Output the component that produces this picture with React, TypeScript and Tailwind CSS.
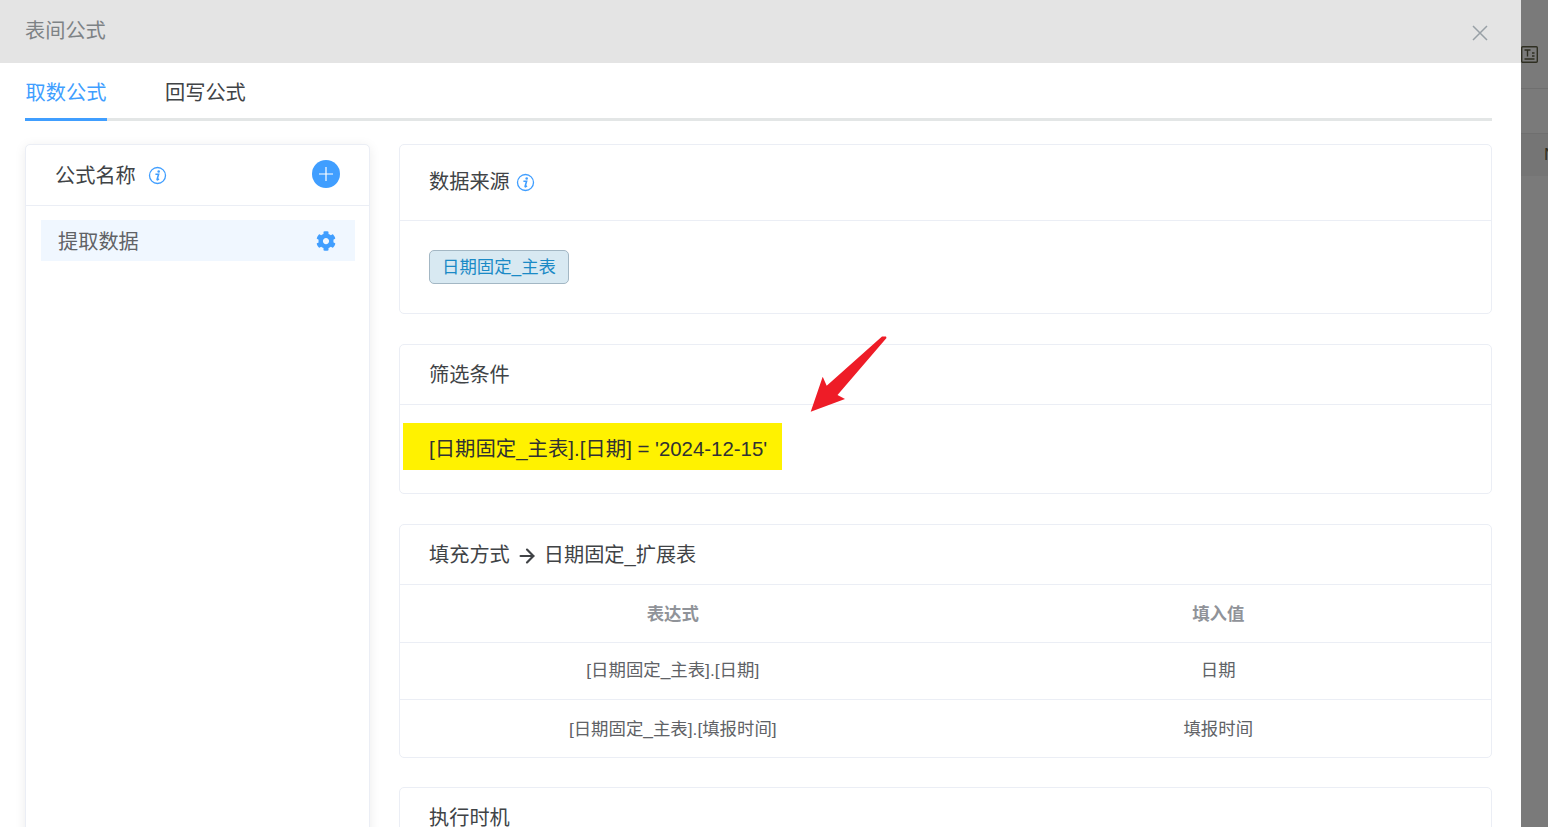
import { FaCog } from "react-icons/fa";
import { LuArrowRight } from "react-icons/lu";

const FONT = "font-['Liberation_Sans','Noto_Sans_CJK_SC',sans-serif]";

function InfoIcon() {
  return (
    <svg width="19" height="19" viewBox="0 0 19 19" fill="none" className="shrink-0">
      <circle cx="9.5" cy="9.5" r="8" stroke="#409eff" strokeWidth="1.3" />
      <circle cx="10.7" cy="5.5" r="1.3" fill="#409eff" />
      <path d="M7.4 8.2h3.2l-1.5 5.2c-.1.5.3.6.7.3l1.2-.8" stroke="#409eff" strokeWidth="1.6" fill="none" />
    </svg>
  );
}

function Card({ children, className }: { children: React.ReactNode; className: string }) {
  return <section className={`bg-white border border-[#ebeef5] rounded-[5px] ${className}`}>{children}</section>;
}

const rows = [
  ["[日期固定_主表].[日期]", "日期"],
  ["[日期固定_主表].[填报时间]", "填报时间"],
];

export default function App() {
  return (
    <div className={`relative flex h-[827px] w-[1548px] overflow-hidden bg-white ${FONT}`}>
      <div className="flex h-full w-[1521px] shrink-0 flex-col overflow-hidden bg-white">
        <header className="flex h-[63px] shrink-0 items-center justify-between bg-[#e4e4e4] pl-[25px] pr-[32px]">
          <h1 className="text-[20.2px] leading-[28px] text-[#7d8285] font-normal -mt-[2px]">表间公式</h1>
          <svg width="18" height="18" viewBox="0 0 18 18" className="mt-[3px]" stroke="#98a0a6" strokeWidth="1.5">
            <path d="M2 2l14 14M16 2L2 16" />
          </svg>
        </header>

        <div className="flex min-h-0 flex-1 flex-col pl-[25px] pr-[29px]">
          <nav className="flex h-[58px] shrink-0 border-b-[3px] border-[#e3e6e6] text-[20.2px]">
            <div className="-mb-[3px] flex h-[58px] w-[82px] items-center justify-center border-b-[3px] border-[#409eff] pt-[5px] text-[#409eff]">取数公式</div>
            <div className="ml-[58px] flex h-[55px] items-center pt-[5px] text-[#404346]">回写公式</div>
          </nav>

          <div className="mt-[23px] flex min-h-0 flex-1 gap-[29px]">
            <aside className="h-[740px] w-[345px] shrink-0 rounded-[5px] border border-[#ebeef5] bg-white shadow-[0_2px_12px_rgba(0,0,0,0.08)]">
              <div className="flex h-[61px] items-center justify-between border-b border-[#ebeef5] pl-[29px] pr-[29px]">
                <div className="mt-[2px] flex items-center gap-[12px] text-[20.2px] text-[#404346]">
                  <span>公式名称</span>
                  <InfoIcon />
                </div>
                <div className="flex h-[28px] w-[28px] items-center justify-center rounded-full bg-[#409eff] -mt-[2px]">
                  <svg width="14" height="14" viewBox="0 0 14 14" stroke="white" strokeWidth="1.2">
                    <path d="M7 0v14M0 7h14" />
                  </svg>
                </div>
              </div>
              <div className="pl-[15px] pr-[14px] pt-[14px]">
                <div className="flex h-[41px] items-center justify-between bg-[#f0f7ff] pl-[17px] pr-[19px]">
                  <span className="mt-[4px] text-[20.2px] text-[#606266]">提取数据</span>
                  <FaCog className="text-[20px] text-[#409eff]" />
                </div>
              </div>
            </aside>

            <main className="flex min-w-0 flex-1 flex-col gap-[30px]">
              <Card className="h-[170px] shrink-0">
                <div className="flex h-[76px] items-center gap-[6px] border-b border-[#ebeef5] pl-[29px] text-[20.2px] text-[#404346]">
                  <span>数据来源</span>
                  <InfoIcon />
                </div>
                <div className="pl-[29px] pt-[29px]">
                  <span className="inline-flex h-[34px] w-[140px] items-center justify-center rounded-[5px] border border-[#a3b7c4] bg-[#d8e9f2] text-[17.4px] text-[#1b8ac6]">日期固定_主表</span>
                </div>
              </Card>

              <Card className="h-[150px] shrink-0">
                <div className="flex h-[60px] items-center border-b border-[#ebeef5] pl-[29px] pt-[2px] text-[20.2px] text-[#404346]">筛选条件</div>
                <div className="pl-[3px] pt-[18px]">
                  <span className="inline-flex h-[47px] w-[379px] items-center bg-[#fff200] pl-[26px] pt-[6px] text-[20.4px] text-[#303133]">[日期固定_主表].[日期] = '2024-12-15'</span>
                </div>
              </Card>

              <Card className="h-[234px] shrink-0">
                <div className="flex h-[60px] items-center gap-[6px] border-b border-[#ebeef5] pl-[29px] pt-[2px] text-[20.2px] text-[#404346]">
                  <span>填充方式</span>
                  <LuArrowRight className="text-[22px]" strokeWidth={2.4} />
                  <span>日期固定_扩展表</span>
                </div>
                <div className="grid h-[58px] grid-cols-2 items-center border-b border-[#ebeef5] pt-[2px] text-center text-[17.4px] font-bold text-[#909399]">
                  <div>表达式</div>
                  <div>填入值</div>
                </div>
                {rows.map(([a, b], i) => (
                  <div key={a} className={`grid grid-cols-2 items-center text-center text-[17.4px] text-[#606266] ${i === 0 ? "h-[57px] border-b border-[#ebeef5] pb-[2px]" : "h-[58px]"}`}>
                    <div>{a}</div>
                    <div>{b}</div>
                  </div>
                ))}
              </Card>

              <Card className="-mt-[1px] h-[120px] shrink-0">
                <div className="flex h-[60px] items-center pl-[29px] text-[20.2px] text-[#404346]">执行时机</div>
              </Card>
            </main>
          </div>
        </div>
      </div>

      <div className="flex flex-1 flex-col bg-[#7a7a7a] text-[#2f2f22]">
        <div className="flex h-[89px] items-end border-b border-[#6f6f6f] pb-[25px]">
          <svg width="17" height="17" viewBox="0 0 17 17" fill="none" stroke="#2f2f22" strokeWidth="1.4">
            <rect x="0.7" y="0.7" width="15.6" height="15.6" rx="1" />
            <path d="M3.5 4h6M6.5 4v6.5M3.5 13h10M11 7h2.5M11 10h2.5" />
          </svg>
        </div>
        <div className="h-[45px] border-b border-[#6f6f6f]" />
        <div className="flex h-[42px] items-center overflow-hidden bg-[#757575] pl-[23px] text-[17px]">N</div>
      </div>

      <svg width="80" height="80" viewBox="0 0 80 80" className="pointer-events-none absolute left-[808px] top-[334px]">
        <polygon points="74,2.5 78,2.5 78.5,4 29.5,61 37,65 2.7,77.7 14.7,42.7 18.7,51.7" fill="#ee1c27" />
      </svg>
    </div>
  );
}
